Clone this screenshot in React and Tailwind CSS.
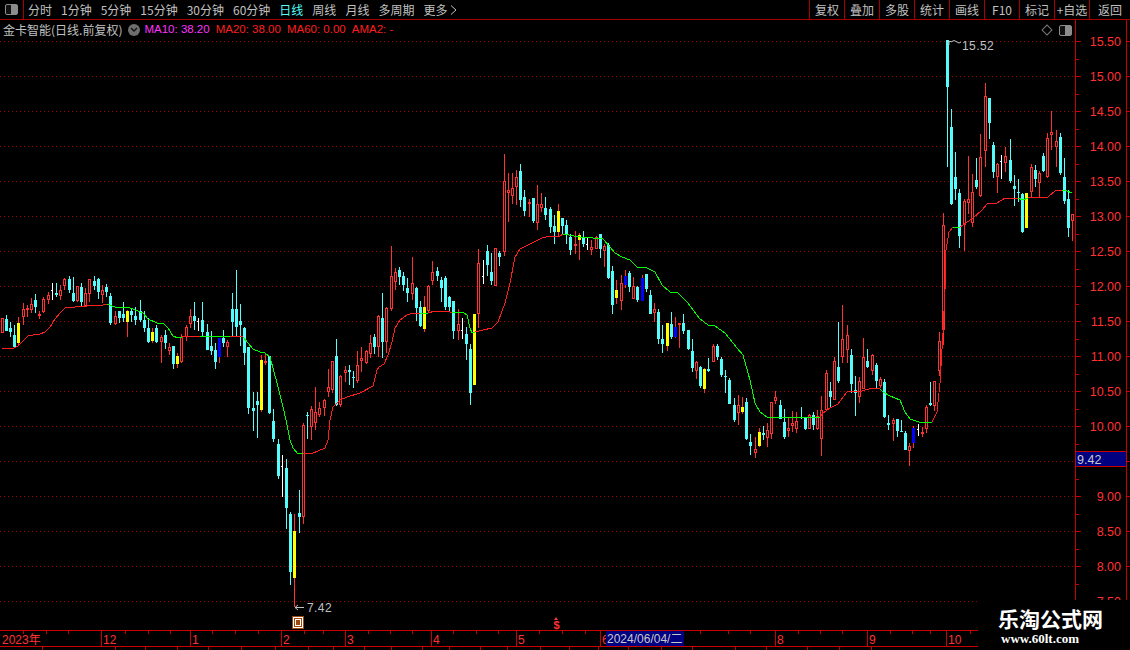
import React from "react";

const RED = "#ff3232";
const CYAN = "#54fcfc";

// [x, type, high, bodyTop, bodyBottom, low] in chart pixels, r=hollow red c=cyan y=yellow b=blue w=white doji
const candles = [
  [2,"r",318,318,333,333],[6,"c",315,319,331,331],[10,"c",322,328,332,337],[14,"c",325,335,347,348],[18,"y",317,323,343,345],
  [23,"r",303,309,317,325],[27,"r",305,308,310,317],[31,"r",298,304,310,313],[35,"c",294,300,307,313],[39,"r",311,314,316,319],
  [43,"r",297,299,312,313],[48,"r",292,295,300,304],[52,"w",283,290,291,300],[56,"c",283,293,295,297],[60,"r",285,290,296,300],
  [64,"r",278,279,286,290],[69,"c",276,279,290,293],[73,"c",277,293,301,302],[77,"r",286,286,301,302],[81,"c",283,287,302,307],
  [85,"r",288,293,306,307],[89,"r",279,279,294,302],[94,"c",276,281,286,290],[98,"c",278,279,292,299],[102,"r",285,290,295,303],
  [106,"c",284,287,292,297],[110,"c",293,296,323,325],[115,"r",311,316,324,325],[119,"c",311,311,318,323],[123,"c",302,314,318,322],
  [127,"y",310,311,322,337],[131,"c",308,311,315,322],[135,"c",307,316,320,325],[140,"c",300,311,320,322],[144,"c",311,320,328,332],
  [148,"c",318,328,342,343],[152,"y",328,332,341,343],[156,"c",325,328,342,343],[161,"r",335,337,342,363],[165,"c",330,335,343,349],
  [169,"r",343,347,351,355],[173,"c",346,346,364,369],[177,"y",353,356,364,368],[181,"r",334,337,362,363],[186,"r",325,327,337,341],
  [190,"r",309,316,324,328],[194,"c",302,316,321,330],[198,"w",318,321,322,331],[202,"c",302,320,332,336],[207,"c",324,332,350,350],
  [211,"c",331,346,351,355],[215,"c",343,350,362,369],[219,"b",338,338,357,363],[223,"c",330,338,343,347],[227,"r",340,342,347,357],
  [232,"c",293,309,322,337],[236,"c",270,309,327,337],[240,"c",304,321,325,346],[244,"c",327,328,353,365],[248,"c",347,347,408,414],
  [253,"c",392,408,411,431],[257,"c",392,401,405,438],[261,"y",355,360,410,412],[265,"r",353,361,363,365],[269,"c",356,356,413,414],
  [273,"c",409,421,439,442],[278,"c",439,444,476,479],[282,"w",455,466,485,497],[286,"c",459,468,508,529],[290,"c",512,514,572,585],
  [294,"y",514,531,578,607],[299,"c",490,513,517,533],[303,"r",423,425,517,524],[307,"c",412,415,416,439],[311,"r",406,409,427,440],
  [315,"r",387,412,423,430],[319,"r",402,408,415,417],[324,"r",399,400,408,416],[328,"r",369,387,392,397],[332,"r",361,361,390,393],
  [336,"c",339,356,405,406],[340,"r",375,376,405,407],[345,"r",366,370,373,382],[349,"c",365,370,372,385],[353,"c",371,377,378,388],
  [357,"r",351,365,381,383],[361,"r",347,358,361,372],[366,"r",350,351,363,364],[370,"r",335,343,354,358],[374,"c",334,337,347,354],
  [378,"r",315,316,347,357],[382,"c",293,318,342,358],[386,"r",307,308,342,353],[391,"r",246,276,309,311],[395,"r",268,272,282,290],
  [399,"c",267,270,277,285],[403,"c",272,276,285,291],[407,"c",278,288,293,302],[412,"r",257,283,294,300],[416,"c",287,288,308,321],
  [420,"c",301,307,326,327],[424,"y",296,307,329,332],[428,"r",285,286,311,313],[432,"r",261,272,281,285],[437,"c",267,271,276,281],
  [441,"c",277,280,288,302],[445,"c",276,278,307,310],[449,"c",296,297,307,311],[453,"c",301,301,331,339],[458,"r",309,324,331,340],
  [462,"w",318,330,331,339],[466,"c",327,334,344,360],[470,"c",344,349,393,405],[474,"y",314,314,385,385],[478,"r",249,263,314,328],
  [483,"w",260,276,277,284],[487,"c",245,251,265,276],[491,"c",253,272,281,285],[495,"r",248,248,286,286],[499,"c",251,253,257,266],
  [504,"r",154,181,252,256],[508,"r",173,190,193,222],[512,"r",173,188,196,204],[516,"r",170,177,187,205],[520,"c",164,171,200,207],
  [524,"c",190,197,211,216],[529,"r",199,202,204,217],[533,"c",198,198,221,223],[537,"r",185,204,223,230],[541,"r",193,204,208,212],
  [545,"c",197,208,215,220],[550,"c",207,209,227,233],[554,"c",215,226,232,244],[558,"y",204,211,232,237],[562,"c",218,218,226,235],
  [566,"c",220,225,235,244],[570,"c",234,237,250,255],[575,"r",231,244,246,254],[579,"y",233,235,240,260],[583,"c",231,237,244,247],
  [587,"w",238,244,245,250],[591,"r",240,247,250,255],[596,"r",236,237,249,249],[600,"c",234,234,249,258],[604,"r",244,246,251,267],
  [608,"c",243,245,278,279],[612,"c",266,271,305,314],[616,"y",280,290,298,304],[621,"r",275,283,301,310],[625,"b",270,276,285,288],
  [629,"c",271,273,287,292],[633,"r",277,286,299,299],[637,"c",286,287,300,302],[642,"b",275,278,301,301],[646,"c",274,274,289,292],
  [650,"c",290,295,314,314],[654,"r",303,309,313,322],[658,"c",309,312,339,344],[662,"c",325,339,344,353],[667,"y",323,323,346,351],
  [671,"c",312,324,337,339],[675,"b",317,327,337,338],[679,"r",323,323,324,348],[683,"c",314,323,331,334],[688,"c",330,330,349,350],
  [692,"c",339,351,368,372],[696,"r",361,362,371,379],[700,"c",366,367,386,388],[704,"y",368,369,389,393],[708,"c",358,369,371,372],
  [713,"r",344,346,362,362],[717,"c",344,346,357,360],[721,"c",357,359,375,377],[725,"c",370,376,377,393],[729,"c",378,380,404,404],
  [734,"c",398,405,420,422],[738,"r",395,405,413,425],[742,"y",397,407,412,414],[746,"c",398,402,439,440],[750,"c",434,442,446,455],
  [755,"r",437,449,453,458],[759,"y",428,432,446,447],[763,"c",426,433,435,440],[767,"r",423,430,438,447],[771,"r",402,402,434,439],
  [775,"r",391,397,401,404],[780,"c",400,405,419,419],[784,"c",409,422,437,439],[788,"r",418,428,431,437],[792,"r",411,423,426,432],
  [796,"r",412,421,429,433],[801,"c",407,417,418,419],[805,"c",417,418,429,430],[809,"r",414,415,429,429],[813,"c",412,415,425,430],
  [817,"r",410,416,429,430],[821,"r",396,410,439,456],[826,"r",370,373,410,411],[830,"c",382,391,397,408],[834,"r",357,361,400,400],
  [838,"c",322,367,381,383],[842,"r",305,339,357,363],[847,"r",325,335,350,363],[851,"c",349,355,384,393],[855,"c",376,390,393,416],
  [859,"r",377,381,397,403],[863,"r",338,357,389,389],[867,"c",349,361,367,368],[872,"r",354,355,371,375],[876,"c",363,365,381,388],
  [880,"r",377,379,386,388],[884,"c",379,382,417,418],[888,"c",415,423,425,430],[893,"r",418,420,424,441],[897,"c",419,419,431,437],
  [901,"c",420,431,432,432],[905,"c",431,433,450,450],[909,"r",443,446,451,466],[913,"b",426,428,443,448],[918,"w",424,429,430,436],
  [922,"r",427,432,433,437],[926,"r",405,407,429,433],[930,"c",382,403,405,406],[934,"r",381,381,406,411],[939,"r",332,341,371,376],
  [943,"r",213,225,330,345],[947,"c",40,40,87,167],[951,"c",109,127,204,205],[955,"c",152,177,189,200],[959,"c",189,193,236,248],
  [964,"r",199,201,225,251],[968,"r",156,199,203,214],[972,"r",174,192,223,227],[976,"c",158,180,187,189],[980,"r",134,157,196,197],
  [985,"r",83,96,151,167],[989,"c",98,98,123,139],[993,"c",142,145,172,178],[997,"r",163,164,177,193],[1001,"w",155,161,162,179],
  [1005,"r",147,156,163,172],[1010,"c",139,160,181,183],[1014,"c",175,186,189,206],[1018,"c",179,192,193,202],[1022,"c",193,194,232,233],
  [1026,"y",193,193,228,228],[1031,"r",164,167,192,197],[1035,"c",165,170,179,187],[1039,"r",171,173,183,197],[1043,"c",153,156,171,172],
  [1047,"r",133,138,177,178],[1051,"r",111,132,135,150],[1056,"r",130,141,147,167],[1060,"c",133,137,173,175],[1064,"c",158,177,201,204],
  [1068,"c",190,199,228,237],[1072,"r",214,214,221,241],
];

const maLine = [
  ["#ff1e1e","2,349 14,348 18,346 23,341 28,336 33,335 40,334 45,332 50,327 55,319 60,313 65,308 75,307 87,306 103,305 107,304"],
  ["#00ff00","107,304 115,307 128,307 135,310 143,313 148,319 157,323 163,323 168,328 173,336 178,338 182,337"],
  ["#ff1e1e","182,337 197,336 200,336"],
  ["#00ff00","200,336 230,337"],
  ["#ff1e1e","230,337 240,336 243,337"],
  ["#00ff00","243,337 248,343 253,349 260,352 265,353 270,357 277,383 283,407 286,420 288,430 290,440 293,448 298,454 303,453"],
  ["#ff1e1e","303,453 313,453 318,451 325,448 328,440 330,420 333,407 340,400 347,397 360,393 373,386 377,370 379,367 384,364 388,355 392,342 395,328 400,320 407,315 413,313 420,313"],
  ["#00ff00","420,313 428,313"],
  ["#ff1e1e","428,313 435,311 450,312 452,312"],
  ["#00ff00","452,312 463,312 467,315 470,328 472,333 475,332"],
  ["#ff1e1e","475,332 483,330 492,328 498,322 505,303 510,283 515,257 520,249 530,244 542,238 550,236 560,236 563,234"],
  ["#00ff00","563,234 580,237 593,238 603,239 610,247 615,253 622,257 630,260 637,267 645,267 655,272 662,285 670,292 678,293 688,303 700,319 708,325 715,326 725,333 737,348 743,355 750,380 755,403 760,412 767,417 780,417 820,418"],
  ["#ff1e1e","820,418 823,413 830,408 838,404 843,397 847,392 862,391 872,388 880,389"],
  ["#00ff00","880,389 883,392 890,396 900,400 905,412 910,419 922,423 932,422"],
  ["#ff1e1e","932,422 937,412 940,383 943,333 945,290 946,250 949,232 953,227"],
  ["#00ff00","953,227 960,227"],
  ["#ff1e1e","960,227 963,225 973,218 982,210 987,204 997,203 1005,198 1018,198"],
  ["#00ff00","1018,198 1023,200 1028,198"],
  ["#ff1e1e","1028,198 1048,197 1055,191 1062,190"],
  ["#00ff00","1062,190 1067,191 1072,193"],
];

const fills = { c: CYAN, y: "#ffff00", b: "#0000ff", w: "#ffffff" };
const priceLabels = ["15.50","15.00","14.50","14.00","13.50","13.00","12.50","12.00","11.50","11.00","10.50","10.00","9.50","9.00","8.50","8.00","7.50"];
const toolbar = ["分时","1分钟","5分钟","15分钟","30分钟","60分钟","日线","周线","月线","多周期"];
const actions = ["复权","叠加","多股","统计","画线","F10","标记","+自选","返回"];
const months = [[101,"12"],[190,"1"],[281,"2"],[345,"3"],[431,"4"],[516,"5"],[600,"6"],[775,"8"],[867,"9"],[946,"10"]];
const monthTicks = [23,46,68,125,148,170,212,235,258,304,323,368,390,412,453,476,498,539,562,585,625,648,670,700,728,750,798,820,842,890,912,930,970];
const stripTicks = [42,115,145,177,208,241,275,308,333,364,391,422,449,480,507,540,569,598,628,661,692,735,766,807,839,871];

function PanelIcon() {
  return (
    <div className="flex h-[11px] w-[13px] rounded-[2px] border border-[#8c8c8c] bg-[#111]">
      <div className="w-[5px]" />
      <div className="flex-1 bg-[#8c8c8c]" />
    </div>
  );
}

function Candle({ c }) {
  const [x, type, hi, top, bot, lo] = c;
  if (type === "r") {
    return (
      <g fill={RED}>
        <rect x={x} y={hi} width="1" height={lo - hi} />
        <rect x={x - 0.5} y={top + 0.5} width="2" height={Math.max(bot - top - 1, 1)} fill="#000" stroke={RED} />
      </g>
    );
  }
  if (type === "w") {
    return (
      <g fill={fills.w}>
        <rect x={x} y={hi} width="1" height={lo - hi} />
        <rect x={x - 1} y={top} width="1" height="1" />
      </g>
    );
  }
  const wick = type === "y" || type === "b" ? RED : fills[type];
  return (
    <g>
      <rect x={x} y={hi} width="1" height={lo - hi} fill={wick} />
      <rect x={x - 1} y={top} width="3" height={Math.max(bot - top, 1)} fill={fills[type]} />
    </g>
  );
}

function Chart() {
  return (
    <svg width="1075" height="590" viewBox="0 40 1075 590" className="block" shapeRendering="crispEdges">
      <defs>
        <pattern id="gridDots" width="4" height="1" patternUnits="userSpaceOnUse">
          <rect width="1" height="1" fill="#a00000" />
        </pattern>
      </defs>
      {priceLabels.map((p, i) => (
        <rect key={p} x="0" y={41 + i * 35} width="1073" height="1" fill="url(#gridDots)" />
      ))}
      {candles.map((c) => <Candle key={c[0]} c={c} />)}
      {maLine.map(([color, pts], i) => (
        <polyline key={i} points={pts} fill="none" stroke={color} strokeWidth="1" />
      ))}
      <g fill="#c0c0c0" fontSize="12" fontFamily="Liberation Sans, sans-serif" shapeRendering="auto">
        <path d="M948 41.500h3M949 41v4M951 42l3-1.500 5 2.500 2-1" fill="none" stroke="#c0c0c0" />
        <text x="962" y="50" letterSpacing="0.4">15.52</text>
        <path d="M304 607.500h-9l3-2.500m-3 2.500l3 2.500" fill="none" stroke="#c0c0c0" />
        <text x="307" y="612" letterSpacing="0.4">7.42</text>
      </g>
      <rect x="292" y="616" width="12" height="13" fill="#9a4a10" />
      <rect x="293.500" y="617.500" width="9" height="10" fill="none" stroke="#fff" />
      <rect x="295.500" y="619.500" width="5" height="6" fill="none" stroke="#fff" />
      <path d="M556 617l-2 3h4z" fill={RED} shapeRendering="auto" />
      <text x="553.500" y="629" fill={RED} fontSize="11" fontWeight="700" fontFamily="Liberation Sans, sans-serif" shapeRendering="auto">$</text>
    </svg>
  );
}

function PriceAxis() {
  return (
    <svg width="55" height="610" viewBox="1075 20 55 610" className="block" shapeRendering="crispEdges">
      <line x1="1075.500" x2="1075.500" y1="20" y2="630" stroke="#c80000" />
      <line x1="1126.500" x2="1126.500" y1="20" y2="630" stroke="#c80000" />
      {priceLabels.map((p, i) => {
        const y = 41.5 + i * 35;
        return (
          <g key={p}>
            <line x1="1075" x2="1081" y1={y} y2={y} stroke="#c80000" />
            <line x1="1075" x2="1079" y1={y + 17.5} y2={y + 17.5} stroke="#c80000" />
            <line x1="1126" x2="1130" y1={y} y2={y} stroke="#c80000" />
            {p !== "9.50" && (
              <text x="1121" y={y + 4.5} textAnchor="end" fill={RED} fontSize="12.500" fontFamily="Liberation Sans, sans-serif" shapeRendering="auto">{p}</text>
            )}
          </g>
        );
      })}
      <rect x="1075.500" y="451.500" width="51" height="15" fill="#000080" stroke="#c80000" />
      <text x="1077" y="463.500" fill="#c8c8c8" fontSize="12.500" fontFamily="Liberation Sans, sans-serif" shapeRendering="auto">9.42</text>
    </svg>
  );
}

function TimeAxis() {
  return (
    <svg width="1130" height="17" viewBox="0 630 1130 17" className="block" shapeRendering="crispEdges">
      <line x1="0" x2="1130" y1="630.500" y2="630.500" stroke="#c80000" />
      <line x1="0" x2="1130" y1="646.500" y2="646.500" stroke="#c80000" />
      {monthTicks.map((x) => <line key={x} x1={x + 0.5} x2={x + 0.5} y1="631" y2="634" stroke="#c80000" />)}
      {months.map(([x, label]) => (
        <g key={label}>
          <line x1={x + 0.5} x2={x + 0.5} y1="631" y2="646" stroke="#c80000" />
          <text x={x + 2} y="644" fill={RED} fontSize="12" fontFamily="Liberation Sans, sans-serif" shapeRendering="auto">{label}</text>
        </g>
      ))}
      <text x="2" y="644" fill={RED} fontSize="12" fontFamily="Liberation Sans, 'Noto Sans CJK SC', sans-serif" shapeRendering="auto">2023年</text>
    </svg>
  );
}

export default function App() {
  return (
    <div className="relative h-[650px] w-[1130px] overflow-hidden bg-black text-[12px] leading-none text-[#c0c0c0] [font-family:'Noto_Sans_CJK_SC','Liberation_Sans',sans-serif]">
      <div className="flex h-[20px] items-center border-b border-[#a80000]">
        <div className="flex h-full w-[24px] items-center justify-center border-r border-[#a80000]">
          <PanelIcon />
        </div>
        <div className="ml-[4px] flex items-center gap-[9px]">
          {toolbar.map((t) => (
            <span key={t} className={t === "日线" ? "text-[#54fcfc]" : ""}>{t}</span>
          ))}
          <span className="flex items-center gap-[3px]">
            更多
            <svg width="7" height="10" viewBox="0 0 7 10" fill="none" stroke="#c0c0c0"><path d="M1 0.500l5 4.500-5 4.500" /></svg>
          </span>
        </div>
        <div className="ml-auto flex h-full">
          {actions.map((t, i) => (
            <div key={t} className={`flex h-full items-center justify-center border-l border-[#a80000] ${i === actions.length - 1 ? "w-[41px]" : "w-[35px]"}`}>{t}</div>
          ))}
        </div>
      </div>

      <div className="flex">
        <div className="w-[1075px]">
          <div className="flex h-[20px] items-center pl-[3px]">
            <span>金卡智能(日线.前复权)</span>
            <span className="ml-[6px] flex h-[12px] w-[12px] items-center justify-center rounded-full bg-[#6e6e6e]">
              <svg width="8" height="6" viewBox="0 0 8 6" fill="none" stroke="#111" strokeWidth="1.400"><path d="M1 1l3 3 3-3" /></svg>
            </span>
            <div className="ml-[4px] flex gap-[6px] text-[11.500px] [font-family:'Liberation_Sans',sans-serif]">
              <span className="text-[#ff32ff]">MA10: 38.20</span>
              <span className="text-[#ff1e1e]">MA20: 38.00</span>
              <span className="text-[#ff1e1e]">MA60: 0.00</span>
              <span className="text-[#ff1e1e]">AMA2: -</span>
            </div>
            <div className="ml-auto mr-[3px] flex items-center gap-[8px]">
              <div className="h-[8px] w-[8px] rotate-45 border border-[#7a7a7a]" />
              <PanelIcon />
            </div>
          </div>
          <Chart />
        </div>
        <PriceAxis />
      </div>

      <TimeAxis />

      <div className="relative h-[3px]">
        {stripTicks.map((x) => (
          <div key={x} className="absolute top-0 h-[3px] w-px bg-[#c80000]" style={{ left: x }} />
        ))}
      </div>

      <div className="absolute left-[606px] top-[631px] flex h-[15px] w-[78px] items-center bg-[#000080] pl-[1px] text-[12px] text-[#c8c8c8] [font-family:'Liberation_Sans','Noto_Sans_CJK_SC',sans-serif]">
        2024/06/04/二
      </div>

      <div className="absolute bottom-0 left-[978px] flex h-[50px] w-[152px] flex-col items-start bg-black pl-[20px] pt-[5px]">
        <span className="text-[21px] font-bold leading-[26px] text-white [font-family:'Noto_Sans_CJK_SC',sans-serif]">乐淘公式网</span>
        <span className="ml-[3px] text-[13px] font-bold leading-[15px] text-white [font-family:'Liberation_Serif',serif]">www.60lt.com</span>
      </div>
    </div>
  );
}
